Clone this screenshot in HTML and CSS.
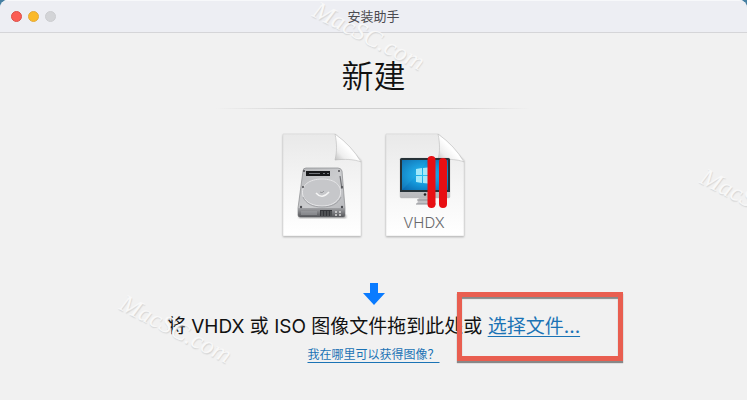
FILE: index.html
```html
<!DOCTYPE html>
<html lang="zh-CN">
<head>
<meta charset="utf-8">
<meta name="viewport" content="width=device-width, initial-scale=1">
<title>安装助手</title>
<link rel="stylesheet" href="styles.css">
</head>
<body>
<div class="window">
  <header class="titlebar">
    <div class="controls">
      <button class="dot dot-close" type="button" aria-label="关闭"></button>
      <button class="dot dot-minimize" type="button" aria-label="最小化"></button>
      <button class="dot dot-zoom" type="button" aria-label="缩放" disabled></button>
    </div>
    <div class="title">安装助手</div>
  </header>
  <main class="content">
    <h1 class="heading">新建</h1>
    <div class="divider"></div>
    <div class="files">
      <svg class="file" width="88" height="112" viewBox="0 0 88 112" aria-hidden="true">
        <defs>
          <linearGradient id="paper" x1="0" y1="0" x2="0" y2="1"><stop offset="0" stop-color="#e9e9e9"/><stop offset=".5" stop-color="#f5f5f5"/><stop offset="1" stop-color="#fff"/></linearGradient>
          <linearGradient id="fold" x1="0" y1="1" x2="1" y2="0"><stop offset="0" stop-color="#b9b9b9"/><stop offset=".25" stop-color="#eee"/><stop offset=".5" stop-color="#fff"/><stop offset="1" stop-color="#d8d8d8"/></linearGradient>
          <linearGradient id="metal" x1="0" y1="0" x2="1" y2="1"><stop offset="0" stop-color="#b8b9bc"/><stop offset=".5" stop-color="#cbccce"/><stop offset="1" stop-color="#b6b7bb"/></linearGradient>
          <linearGradient id="front" x1="0" y1="0" x2="0" y2="1"><stop offset="0" stop-color="#a2a3a6"/><stop offset="1" stop-color="#55565a"/></linearGradient>
          <filter id="soft" x="-20%" y="-20%" width="140%" height="140%"><feGaussianBlur stdDeviation="1.2"/></filter>
        </defs>
        <path d="M5 6H57L83 32V108H5Z" fill="#777" opacity=".6" filter="url(#soft)"/>
        <path d="M5 5H57L83 31V107H5Z" fill="url(#paper)" stroke="#d2d2d2" stroke-width=".5"/>
        <path d="M57 5C59 14 59 23 57 31C66 30 76 30 83 33Q74 17 57 5Z" fill="url(#fold)" stroke="#bbb" stroke-width=".6"/>
        <path d="M21 86H68V89H21Z" fill="#555" opacity=".6" filter="url(#soft)"/>
        <path d="M28 39H60Q63 39 64 42L67 79V86Q67 88 65 88H22Q20 88 20 86V79L25 42Q25 39 28 39Z" fill="url(#metal)" stroke="#88898d" stroke-width=".7"/>
        <path d="M20 79H67V86Q67 88 65 88H22Q20 88 20 86Z" fill="url(#front)"/>
        <path d="M28 42H52V47H28Z" fill="#18191b"/>
        <path d="M31 44.500H42M45 44.500H47M49 44.500H51" stroke="#74777c" stroke-width="1"/>
        <path d="M25 67C22 56 32 50 44 50S65 56 62 67C59 74 52 77 44 77S28 74 25 67Z" fill="#c6c7ca" stroke="#e6e6e8" stroke-width="1"/>
        <path d="M25 68C28 75 35 78 44 78S60 75 63 68" fill="none" stroke="#97989c" stroke-width=".8"/>
        <path d="M38 64Q44 71 51 63" fill="none" stroke="#f5f5f5" stroke-width="1.500"/>
        <path d="M42 63Q44 65 46 62" fill="none" stroke="#96979b" stroke-width="1"/>
        <path d="M62 47L64 60" stroke="#737478" stroke-width="1.200"/>
        <g fill="#4c4d51"><circle cx="26" cy="42" r="1"/><circle cx="61" cy="42" r="1"/><circle cx="25" cy="58" r="1"/><circle cx="64" cy="58" r="1"/><circle cx="23" cy="78" r="1.200"/><circle cx="64" cy="78" r="1.200"/></g>
        <path d="M23 83H39M23 85H39" stroke="#a4a5a9" stroke-width="1"/>
        <path d="M42 81H54V87H42Z" fill="#35363a"/>
        <path d="M44 82V87M47 82V87M50 82V87M53 82V87" stroke="#85868a" stroke-width=".7"/>
        <path d="M57 83H59M61 83H63M57 86H59M61 86H63" stroke="#d9d9d9" stroke-width="1.500"/>
      </svg>
      <svg class="file" width="88" height="112" viewBox="0 0 88 112" role="img" aria-label="VHDX">
        <defs>
          <radialGradient id="screen" cx=".5" cy=".5" r=".7"><stop offset="0" stop-color="#2bc3f3"/><stop offset=".5" stop-color="#1496d9"/><stop offset="1" stop-color="#0965aa"/></radialGradient>
          <linearGradient id="chin" x1="0" y1="0" x2="0" y2="1"><stop offset="0" stop-color="#e7e7e9"/><stop offset="1" stop-color="#b7b8bb"/></linearGradient>
        </defs>
        <path d="M5 6H57L83 32V108H5Z" fill="#777" opacity=".6" filter="url(#soft)"/>
        <path d="M5 5H57L83 31V107H5Z" fill="url(#paper)" stroke="#d2d2d2" stroke-width=".5"/>
        <path d="M57 5C59 14 59 23 57 31C66 30 76 30 83 33Q74 17 57 5Z" fill="url(#fold)" stroke="#bbb" stroke-width=".6"/>
        <path d="M38 68H51L53 75H36Z" fill="#c0c0c3"/>
        <path d="M36 71H54M35 75H55" stroke="#8f9094" stroke-width="1"/>
        <rect x="19" y="29" width="50" height="40" rx="1.500" fill="url(#chin)" stroke="#bbb" stroke-width=".4"/>
        <path d="M19 63V30.500Q19 29 20.500 29H67.500Q69 29 69 30.500V63Z" fill="#263238"/>
        <path d="M21 31H67V61H21Z" fill="url(#screen)"/>
        <path d="M21 31H47L35 47L21 61Z" fill="#46c5ed" opacity=".15"/>
        <path d="M35 40L41 39V46H35ZM42 39L52 38V46H42ZM35 47H41V54L35 53ZM42 47H52V55L42 54Z" fill="#a2e9fb"/>
        <circle cx="44" cy="65.500" r="1.300" fill="#222"/>
        <path d="M50.500 31V75M62 33V75" stroke="#e80f13" stroke-width="8" stroke-linecap="round"/>
        <text x="43" y="99" text-anchor="middle" class="file-label">VHDX</text>
      </svg>
    </div>
    <svg class="arrow" width="24" height="24" viewBox="0 0 24 24" aria-hidden="true"><path d="M8 1H16V11H23L12 23L1 11H8Z" fill="#0a7bff"/></svg>
    <p class="prompt">将 VHDX 或 ISO 图像文件拖到此处或 <span class="choose"><a href="#">选择文件...</a><span class="callout"></span></span></p>
    <a class="help" href="#">我在哪里可以获得图像？</a>
  </main>
  <span class="watermark mark-top" aria-hidden="true">MacSC.com</span>
  <span class="watermark mark-left" aria-hidden="true">MacSC.com</span>
  <span class="watermark mark-right" aria-hidden="true">MacS</span>
</div>
</body>
</html>
```
FILE: styles.css
```css
* { box-sizing: border-box; }

body {
  margin: 0;
  background: #4680a3;
  color: #111;
  font-family: Inter, "Noto Sans CJK SC", sans-serif;
}

.window {
  position: relative;
  min-height: 100vh;
  overflow: hidden;
  border-radius: 8px 8px 0 0;
  background: #f1f1f1;
}

.titlebar {
  display: grid;
  grid-template-columns: 1fr auto 1fr;
  align-items: center;
  height: 33px;
  padding: 0 11px;
  border-bottom: 1px solid #d5d5d8;
  background: #edeef3;
  box-shadow: inset 0 1px #f7f8fa;
}

.controls { display: flex; gap: 6px; }

.dot {
  width: 11px;
  height: 11px;
  padding: 0;
  border: 1px solid #dc5048;
  border-radius: 50%;
  background: #fb5d54;
}

.dot-minimize { border-color: #e3aa3b; background: #fbb927; }
.dot-zoom { border-color: #cccdd0; background: #d3d4d7; }

.title {
  color: #4b4b4f;
  font-size: 13px;
  line-height: 22px;
}

.content {
  display: flex;
  flex-direction: column;
  align-items: center;
  padding: 20px 16px;
}

.heading {
  margin: 0;
  font-size: 32px;
  font-weight: 350;
  line-height: 48px;
}

.divider {
  width: 44%;
  height: 1px;
  margin-top: 7px;
  background: linear-gradient(90deg, transparent, #cfcfcf 30%, #cfcfcf 70%, transparent);
}

.files {
  display: flex;
  gap: 15px;
  margin-top: 20px;
}

.file { display: block; }

.file-label {
  fill: #68696c;
  font-family: Inter, sans-serif;
  font-size: 15px;
  font-weight: 300;
}

.arrow {
  display: block;
  margin-top: 41px;
}

.prompt {
  margin: 5px 0 0;
  font-size: 19px;
  line-height: 32px;
  text-align: center;
}

a {
  color: #1b73b5;
  text-decoration: underline;
  text-decoration-thickness: 1px;
  text-underline-offset: 3px;
}

.choose { position: relative; display: inline-block; }

.callout {
  position: absolute;
  inset: -19px -43px -18px -31px;
  border: 5px solid #e95e50;
  box-shadow: 0 2px 1px #888, inset 0 2px 1px #888;
  pointer-events: none;
}

.help {
  margin-top: 2px;
  font-size: 12px;
  line-height: 20px;
}

.watermark {
  position: absolute;
  color: #f8f8f8;
  font-family: "Liberation Serif", serif;
  font-size: 25px;
  font-style: italic;
  line-height: 28px;
  text-shadow: 1px 1px 1px #d6d6d6;
  transform: rotate(27deg);
  pointer-events: none;
}

.mark-top { top: 22px; left: 308px; }
.mark-left { top: 315px; left: 115px; }
.mark-right { top: 174px; left: 699px; }
```
